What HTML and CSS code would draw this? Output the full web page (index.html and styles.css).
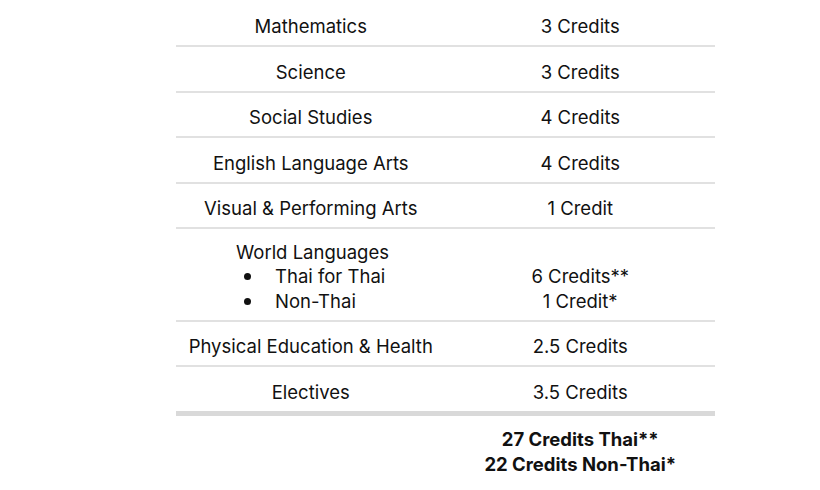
FILE: index.html
```html
<!DOCTYPE html>
<html>
<head>
<meta charset="utf-8">
<link rel="stylesheet" href="styles.css">
</head>
<body>
<div class="page">
  <div class="table">
    <div class="row"><div class="cell">Mathematics</div><div class="cell">3 Credits</div></div>
    <div class="row"><div class="cell">Science</div><div class="cell">3 Credits</div></div>
    <div class="row"><div class="cell">Social Studies</div><div class="cell">4 Credits</div></div>
    <div class="row"><div class="cell">English Language Arts</div><div class="cell">4 Credits</div></div>
    <div class="row"><div class="cell">Visual &amp; Performing Arts</div><div class="cell">1 Credit</div></div>
    <div class="row row-tall">
      <div class="cell cell-list">
        <div class="list-title">World Languages</div>
        <ul class="list">
          <li>Thai for Thai</li>
          <li>Non-Thai</li>
        </ul>
      </div>
      <div class="cell cell-stack">
        <div>&nbsp;</div>
        <div>6 Credits**</div>
        <div>1 Credit*</div>
      </div>
    </div>
    <div class="row"><div class="cell">Physical Education &amp; Health</div><div class="cell">2.5 Credits</div></div>
    <div class="row row-last"><div class="cell">Electives</div><div class="cell">3.5 Credits</div></div>
    <div class="row row-total">
      <div class="cell"></div>
      <div class="cell cell-total">
        <div>27 Credits Thai**</div>
        <div>22 Credits Non-Thai*</div>
      </div>
    </div>
  </div>
</div>
</body>
</html>
```

FILE: styles.css
```css
html, body {
  margin: 0;
  padding: 0;
  background: #ffffff;
}
body {
  font-family: Inter, "Noto Sans", sans-serif;
  font-size: 18.5px;
  color: #111111;
}
.page {
  padding-top: 2px;
  padding-left: 176px;
}
.table {
  width: 539px;
}
.row {
  display: grid;
  grid-template-columns: 269.5px 269.5px;
  height: 43.4px;
  border-bottom: 2px solid #e1e1e1;
}
.cell {
  display: flex;
  align-items: center;
  justify-content: center;
  line-height: 24.5px;
  padding-top: 6px;
  box-sizing: border-box;
}
.row-tall {
  height: 91px;
}
.cell-list {
  display: block;
  padding: 10.75px 0 0 60px;
}
.list {
  margin: 0;
  padding: 0;
  list-style: none;
}
.list li {
  position: relative;
  padding-left: 39px;
}
.list li::before {
  content: "";
  position: absolute;
  left: 8px;
  top: 9px;
  width: 7px;
  height: 7px;
  border-radius: 50%;
  background: #111111;
}
.cell-stack {
  display: block;
  text-align: center;
  padding-top: 10.75px;
}
.row-last {
  height: 43.7px;
  border-bottom: 5px solid #d9d9d9;
}
.row-total {
  height: auto;
  border-bottom: none;
  padding-top: 5px;
}
.cell-total {
  flex-direction: column;
  font-weight: 700;
  line-height: 25px;
}
```
